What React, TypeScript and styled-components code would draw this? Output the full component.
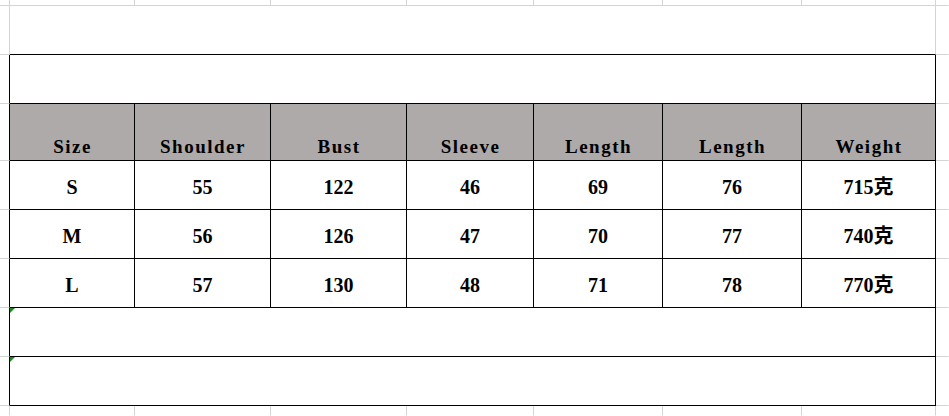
import React from "react";
import styled, { createGlobalStyle } from "styled-components";

const GlobalStyle = createGlobalStyle`
  html, body {
    margin: 0;
    padding: 0;
    background: #fff;
  }
  body {
    overflow: hidden;
  }
`;

// column widths / row heights include the 1px line on the right / bottom
const COLS = [10, 125, 136, 136, 127, 129, 139, 134, 13];
const ROWS = [6, 49, 49, 57, 49, 49, 49, 49, 49, 10];

type Line = "grid" | "ink" | "none";

const lineColor = (l: Line) =>
  l === "ink" ? "#000" : l === "grid" ? "#d4d4d4" : "transparent";

const headers = ["Size", "Shoulder", "Bust", "Sleeve", "Length", "Length", "Weight"];

const rows = [
  ["S", "55", "122", "46", "69", "76", "715克"],
  ["M", "56", "126", "47", "70", "77", "740克"],
  ["L", "57", "130", "48", "71", "78", "770克"],
];

export default function App() {
  return (
    <>
      <GlobalStyle />
      <Sheet>
        {/* top strip of the sheet */}
        {COLS.map((_, i) => (
          <Cell key={"top" + i} $right={i === COLS.length - 1 ? "none" : "grid"} />
        ))}

        {/* blank merged row above the table */}
        <Cell />
        <Cell $span={7} $bottom="ink" />
        <Cell $right="none" />

        {/* title row */}
        <Cell $right="ink" />
        <Cell $span={7} $right="ink" $bottom="ink" />
        <Cell $right="none" />

        {/* header */}
        <Cell $right="ink" />
        {headers.map((h, i) => (
          <HeadCell key={"h" + i} $right="ink" $bottom="ink">
            {h}
          </HeadCell>
        ))}
        <Cell $right="none" />

        {rows.map((r, ri) => (
          <React.Fragment key={"r" + ri}>
            <Cell $right="ink" />
            {r.map((v, ci) => (
              <DataCell key={ci} $right="ink" $bottom="ink">
                {v}
              </DataCell>
            ))}
            <Cell $right="none" />
          </React.Fragment>
        ))}

        {[0, 1].map((k) => (
          <React.Fragment key={"blank" + k}>
            <Cell $right="ink" />
            <Cell $span={7} $right="ink" $bottom="ink" $flag />
            <Cell $right="none" />
          </React.Fragment>
        ))}

        {/* bottom strip */}
        {COLS.map((_, i) => (
          <Cell
            key={"bot" + i}
            $right={i === COLS.length - 1 ? "none" : "grid"}
            $bottom="none"
          />
        ))}
      </Sheet>
    </>
  );
}

const Sheet = styled.div`
  display: grid;
  grid-template-columns: ${COLS.map((c) => c + "px").join(" ")};
  grid-template-rows: ${ROWS.map((r) => r + "px").join(" ")};
  width: 949px;
  height: 416px;
  overflow: hidden;
  background: #fff;
`;

const Cell = styled.div<{
  $right?: Line;
  $bottom?: Line;
  $span?: number;
  $flag?: boolean;
}>`
  box-sizing: border-box;
  position: relative;
  grid-column: span ${(p) => p.$span ?? 1};
  border-right: 1px solid ${(p) => lineColor(p.$right ?? "grid")};
  border-bottom: 1px solid ${(p) => lineColor(p.$bottom ?? "grid")};
  background: #fff;
  display: flex;
  justify-content: center;
  color: #000;

  ${(p) =>
    p.$flag &&
    `
    &::before {
      content: "";
      position: absolute;
      top: 0;
      left: 0;
      border-top: 5px solid #1f8a1f;
      border-right: 5px solid transparent;
    }
  `}
`;

const HeadCell = styled(Cell)`
  background: #aeaaaa;
  align-items: flex-end;
  padding-bottom: 3px;
  padding-left: 1px;
  font-family: "Liberation Serif", serif;
  font-weight: 700;
  font-size: 19px;
  line-height: 20px;
  letter-spacing: 1.5px;
`;

const DataCell = styled(Cell)`
  align-items: center;
  padding-top: 3px;
  font-family: "Liberation Serif", "Noto Sans CJK SC", serif;
  font-weight: 700;
  font-size: 20px;
  line-height: 22px;
`;
